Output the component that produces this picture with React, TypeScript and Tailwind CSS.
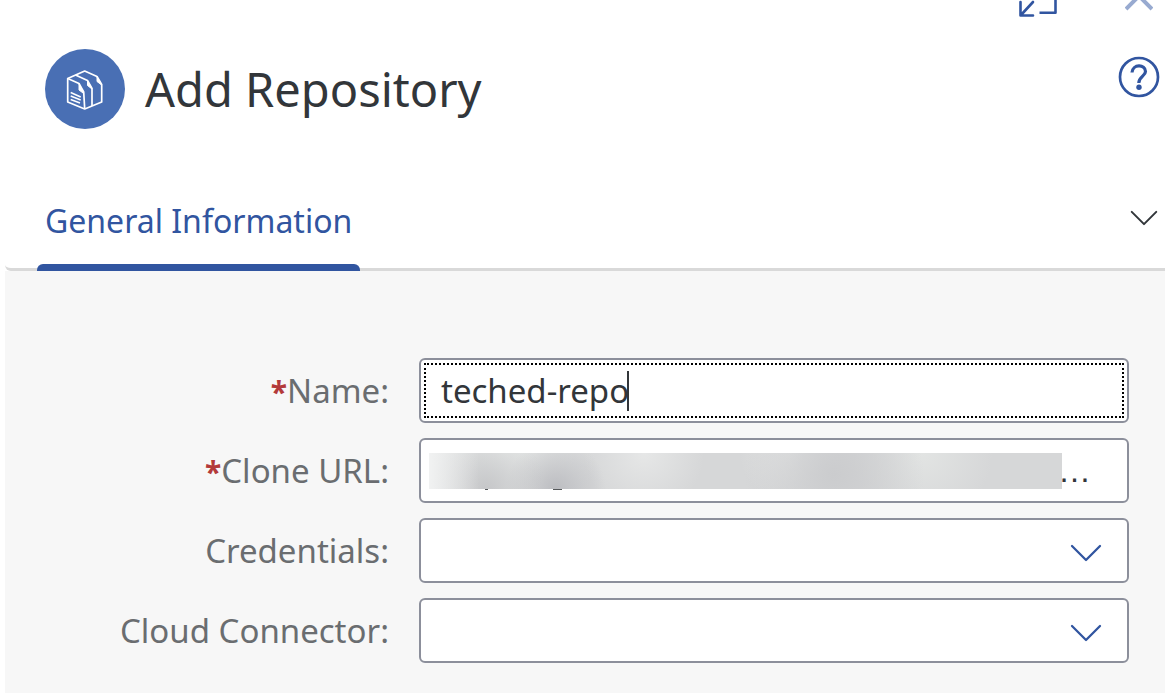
import React, { useState } from "react";

function ChevronDown({ className }: { className: string }) {
  return (
    <svg viewBox="0 0 32 18" fill="none" stroke="currentColor" strokeWidth="2.3" strokeLinecap="round" strokeLinejoin="round" className={className} aria-hidden="true">
      <path d="M2 2 L16 16 L30 2" />
    </svg>
  );
}

function RepositoryIcon() {
  return (
    <svg viewBox="0 0 40 44" fill="none" stroke="white" strokeWidth="1.7" strokeLinejoin="round" className="h-11 w-10" aria-hidden="true">
      <path d="M2.700 11.500 L19.700 4 L32 9.500 L36.700 17.500 V35 L19.700 42 L2.700 35 Z" />
      <path d="M2.700 11.500 L14 16.500 L18.700 25 L19.700 42" />
      <path d="M10.500 8 L22.500 13.500 L27 21.500 V39" />
      <path d="M14 16.500 V23 L18.700 26.500 Z M22.500 13.500 V18.500 L27 22 Z M32 9.500 V14.500 L36.700 18 Z" fill="white" strokeWidth="1" />
      <path d="M5.700 25.500 L15.700 30 M5.700 29 L15.700 33 M5.700 32.500 L15 36" strokeWidth="1.500" />
    </svg>
  );
}

function FieldLabel({ id, text, required }: { id: string; text: string; required?: boolean }) {
  return (
    <label htmlFor={id} className="text-right text-[33px] leading-10 whitespace-nowrap text-[#6a6d70]">
      {required && <span className="text-[30px] leading-none font-bold text-[#b33a3a]">*</span>}
      {text}:
    </label>
  );
}

const fieldClass =
  "block h-[65px] w-full rounded-md border-2 border-[#8c8f9b] bg-white text-[33px] text-[#32363a] outline-none";

function DropDown({ id }: { id: string }) {
  return (
    <div className="relative">
      <select id={id} className={fieldClass + " appearance-none pr-20 pl-5"}>
        <option value="" />
      </select>
      <ChevronDown className="pointer-events-none absolute top-[26px] right-[27px] h-[18px] w-8 text-[#3155a0]" />
    </div>
  );
}

export default function App() {
  const [name, setName] = useState("teched-repo");

  return (
    <div className="flex min-h-screen flex-col overflow-hidden bg-white pl-[5px] font-['Noto_Sans',sans-serif]">
      <header>
        <div className="flex h-[18px] justify-end gap-[66px] pr-3">
          <button type="button" aria-label="Exit full screen" className="h-[18px] w-10 text-[#3155a0]">
            <svg viewBox="0 0 40 18" fill="none" stroke="currentColor" strokeWidth="2.6" strokeLinecap="round" strokeLinejoin="round" className="h-[18px] w-10" aria-hidden="true">
              <path d="M1.500 2 V15.500 H14 M2 15 L14 2" />
              <path d="M20.500 12.700 H36.500 V-4" strokeLinecap="butt" />
            </svg>
          </button>
          <button type="button" aria-label="Close" className="h-[18px] w-7 text-[#98aad0]">
            <svg viewBox="0 0 28 18" fill="none" stroke="currentColor" strokeWidth="4" className="h-[18px] w-7" aria-hidden="true">
              <path d="M1 9 L14 -4 L27 9" />
            </svg>
          </button>
        </div>
        <div className="flex items-start justify-between pt-[31px] pr-[5px] pl-10">
          <div className="flex items-center gap-5">
            <span className="flex size-20 items-center justify-center rounded-full bg-[#496fb4]">
              <RepositoryIcon />
            </span>
            <h1 className="text-[47px] leading-[80px] whitespace-nowrap text-[#32363a]">Add Repository</h1>
          </div>
          <button type="button" aria-label="Help" className="mt-[7px] size-[42px] text-[#3155a0]">
            <svg viewBox="0 0 42 42" fill="none" stroke="currentColor" className="size-[42px]" aria-hidden="true">
              <circle cx="21" cy="21" r="19" strokeWidth="2.700" />
              <path d="M14 16.500 C14.500 7.800 27.500 8 27.500 15.500 C27.500 20 20.800 20.500 20.800 27" strokeWidth="3.200" />
              <circle cx="21" cy="31.200" r="2.700" fill="currentColor" stroke="none" />
            </svg>
          </button>
        </div>
      </header>

      <nav className="mt-[42px] flex h-[100px] items-end justify-between rounded-bl-md border-b-[3px] border-[#d9d9d9] pr-[5px] pl-8">
        <a href="#general" className="-mb-[3px] flex h-[100px] flex-col justify-between text-[#3155a0]">
          <span className="px-2 pt-7 text-[32px] leading-[44px] whitespace-nowrap">General Information</span>
          <span className="h-[7px] rounded-t-md bg-[#3155a0]" />
        </a>
        <button type="button" aria-label="Show sections" className="mb-[42px] flex w-8 justify-center text-[#32363a]">
          <ChevronDown className="h-4 w-7" />
        </button>
      </nav>

      <form id="general" className="grid flex-1 grid-cols-[384px_minmax(0,1fr)] content-start items-center gap-x-[30px] gap-y-[15px] bg-[#f7f7f7] pt-[87px] pr-9 pb-8">
        <FieldLabel id="name" text="Name" required />
        <div className="relative">
          <input id="name" type="text" value={name} onChange={(e) => setName(e.target.value)} className={fieldClass + " px-5"} />
          <span className="pointer-events-none absolute inset-[5px] border-2 border-dotted border-black" />
          <span className="pointer-events-none absolute top-[13px] left-[208px] h-10 w-[2px] bg-[#32363a]" />
        </div>

        <FieldLabel id="url" text="Clone URL" required />
        <div className="relative">
          <input id="url" type="text" readOnly value="…" className={fieldClass + " pr-9 text-right font-['Liberation_Sans',sans-serif]"} />
          <span className="pointer-events-none absolute top-[15px] right-[67px] left-[10px] h-9 bg-[#d6d7d8] bg-[linear-gradient(90deg,#f1f2f2,transparent_50px),radial-gradient(circle_at_9%_100%,#c6c7c9,transparent_60px),radial-gradient(circle_at_20%_100%,#bcbdc1,transparent_50px),radial-gradient(circle_at_64%_60%,#cbccce,transparent_90px),radial-gradient(circle_at_12%_0%,#e7e9e8,transparent_90px),radial-gradient(circle_at_34%_0%,#e6e7e7,transparent_60px),radial-gradient(circle_at_57%_0%,#e2e3e3,transparent_50px),radial-gradient(circle_at_78%_0%,#e2e4e3,transparent_70px)]" />
          <span className="pointer-events-none absolute top-[51px] left-[66px] h-px w-[3px] bg-[#55585b]" />
          <span className="pointer-events-none absolute top-[51px] left-[134px] h-px w-[9px] bg-[#55585b]" />
        </div>

        <FieldLabel id="credentials" text="Credentials" />
        <DropDown id="credentials" />

        <FieldLabel id="connector" text="Cloud Connector" />
        <DropDown id="connector" />
      </form>
    </div>
  );
}
